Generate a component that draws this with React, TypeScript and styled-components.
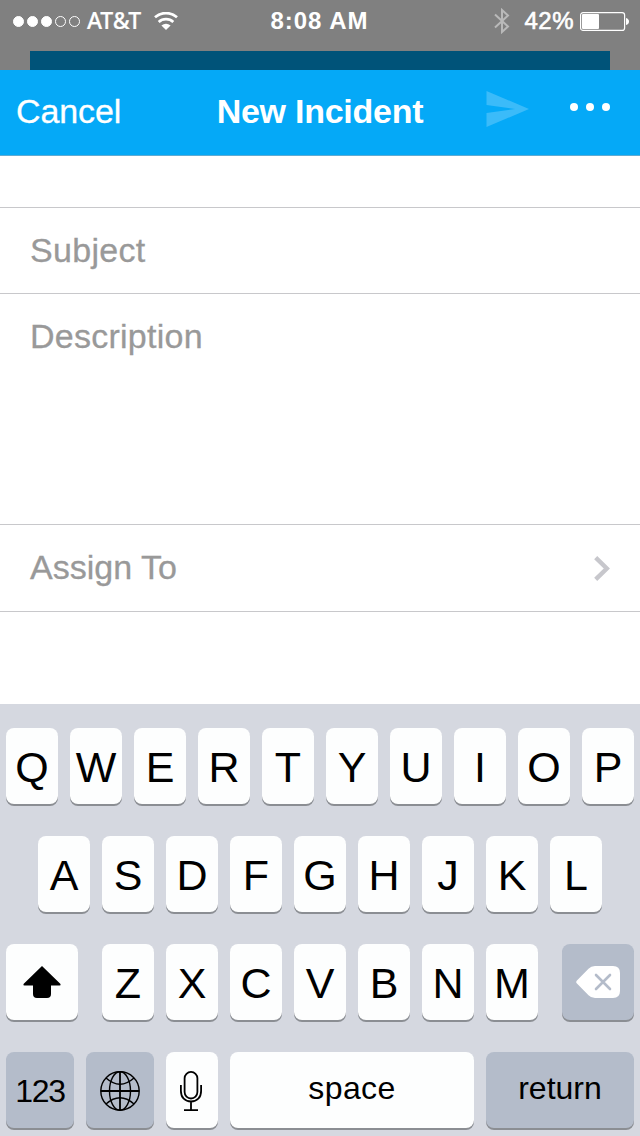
import React from "react";
import styled, { createGlobalStyle } from "styled-components";

const GlobalStyle = createGlobalStyle`
  * { box-sizing: border-box; }
  body {
    margin: 0;
    background: #fff;
    font-family: "Liberation Sans", Arial, sans-serif;
  }
`;

const Screen = styled.div`
  width: 640px;
  height: 1136px;
  overflow: hidden;
  display: flex;
  flex-direction: column;
  background: #fff;
`;

const Top = styled.div`
  height: 70px;
  background: #808080;
  display: flex;
  flex-direction: column;
  justify-content: space-between;
`;

const StatusBar = styled.div`
  height: 40px;
  display: grid;
  grid-template-columns: 1fr auto 1fr;
  align-items: center;
  padding: 0 11px 0 13px;
  color: #fff;
`;

const StatusGroup = styled.div<{ $end?: boolean }>`
  height: 40px;
  display: flex;
  align-items: center;
  justify-content: ${(p) => (p.$end ? "flex-end" : "flex-start")};
`;

const SignalDots = styled.div`
  display: flex;
  gap: 3px;
  padding-top: 1px;
`;

const SignalDot = styled.i<{ $filled: boolean }>`
  width: 11px;
  height: 11px;
  border-radius: 50%;
  border: 1px solid #fff;
  background: ${(p) => (p.$filled ? "#fff" : "transparent")};
`;

const Carrier = styled.span`
  font: 500 23px/38px "Noto Sans", sans-serif;
  letter-spacing: -0.1px;
  padding-bottom: 2px;
  margin: 0 13px 0 7px;
  -webkit-text-stroke: 0.2px #fff;
`;

const Clock = styled.span`
  font-size: 24px;
  font-weight: 700;
  line-height: 40px;
  padding-top: 1px;
  letter-spacing: 1px;
  margin-right: 3px;
`;

const Percent = styled.span`
  font-size: 24px;
  line-height: 40px;
  padding-top: 1px;
  letter-spacing: 0.5px;
  margin: 0 6px 0 14px;
  -webkit-text-stroke: 0.6px #fff;
`;

const BackCard = styled.div`
  height: 19px;
  margin: 0 30px;
  background: #005379;
`;

const NavBar = styled.header`
  height: 86px;
  background: #05a9f7;
  border-bottom: 1px solid #5fabd3;
  display: grid;
  grid-template-columns: 1fr auto 1fr;
  align-items: center;
  padding: 0 30px 3px 16px;
  color: #fff;
  font-size: 34px;
`;

const CancelButton = styled.span`
  justify-self: start;
  letter-spacing: -0.1px;
  -webkit-text-stroke: 0.3px #fff;
`;

const Title = styled.span`
  font-weight: 700;
  letter-spacing: -0.25px;
  margin: 0 -7px 0 7px;
`;

const NavActions = styled.div`
  display: flex;
  justify-content: flex-end;
  align-items: flex-start;
  gap: 41px;
  height: 40px;
`;

const Form = styled.main`
  height: 548px;
  padding-top: 51px;
`;

const Field = styled.div<{ $height: number; $last?: boolean }>`
  height: ${(p) => p.$height}px;
  border-top: 1px solid #c8c8cb;
  border-bottom: ${(p) => (p.$last ? "1px solid #c8c8cb" : "none")};
  padding: 0 30px;
  display: flex;
  justify-content: space-between;
  font-size: 34px;
  line-height: 84px;
  color: #999;
`;

const Placeholder = styled.span<{ $spacing: number }>`
  letter-spacing: ${(p) => p.$spacing}px;
  -webkit-text-stroke: 0.3px #999;
`;

const Disclosure = styled.span`
  display: flex;
  align-items: center;
  height: 86px;
`;

const Keyboard = styled.section`
  flex: 1;
  background: #d5d8e0;
  padding: 24px 6px 0;
  display: flex;
  flex-direction: column;
  gap: 32px;
`;

const KeyRow = styled.div`
  display: flex;
  justify-content: center;
  gap: 12px;
`;

const LetterGroup = styled.div`
  display: flex;
  gap: 12px;
  margin: 0 12px;
`;

const Key = styled.div<{ $width?: number; $dark?: boolean; $drop?: number }>`
  width: ${(p) => p.$width ?? 52}px;
  height: 76px;
  border-radius: 8px;
  background: ${(p) => (p.$dark ? "#b4bcca" : "#fdfefe")};
  box-shadow: 0 2px 0 #8b8e93;
  display: flex;
  align-items: center;
  justify-content: center;
  color: #000;
  font-size: 43px;
  line-height: 76px;
  padding-top: ${(p) => p.$drop ?? 0}px;
`;

const KeyLabel = styled.span<{ $spacing: number; $lift?: number }>`
  font-size: 32px;
  letter-spacing: ${(p) => p.$spacing}px;
  padding-bottom: ${(p) => p.$lift ?? 0}px;
  line-height: 40px;
`;

const WifiIcon = () => (
  <svg width="24" height="18" viewBox="0 0 24 18" fill="none" stroke="#fff">
    <path d="M1 5.3C7.2-.3 16.8-.3 23 5.3" strokeWidth="2.7" />
    <path d="M4.7 9.9C8.8 6.2 15.2 6.2 19.3 9.9" strokeWidth="2.7" />
    <path d="M12 18L7.4 13.4Q12 9.9 16.6 13.4Z" fill="#fff" stroke="none" />
  </svg>
);

const BluetoothIcon = () => (
  <svg width="16" height="26" viewBox="0 0 16 26" fill="none" stroke="#b9b9b9" strokeWidth="2">
    <path d="M1 6.5L14 18.5L8 24V2L14 7.5L1 19.5" />
  </svg>
);

const BatteryIcon = () => (
  <svg width="49" height="20" viewBox="0 0 49 20">
    <rect x="0.6" y="1.6" width="44" height="17.8" rx="2.5" fill="none" stroke="#fff" strokeWidth="1.2" />
    <rect x="2" y="3" width="17" height="15" rx="1" fill="#fff" />
    <path d="M46 7Q49 8 49 10.5T46 14Z" fill="#fff" />
  </svg>
);

const SendIcon = () => (
  <svg width="43" height="36" viewBox="0 0 43 36" fill="#3bbbf9">
    <path d="M.5 0L43 18L.5 36V22L29 18L.5 14Z" />
  </svg>
);

const MoreIcon = () => (
  <svg width="40" height="32" viewBox="0 0 40 32" fill="#fff">
    <circle cx="4" cy="16" r="4" />
    <circle cx="20" cy="16" r="4" />
    <circle cx="36" cy="16" r="4" />
  </svg>
);

const ChevronIcon = () => (
  <svg width="16" height="26" viewBox="0 0 16 26" fill="none" stroke="#c7c7cc" strokeWidth="4.4">
    <path d="M1.7 2.7L12.8 13.5L1.7 24.3" />
  </svg>
);

const ShiftIcon = () => (
  <svg width="38" height="32" viewBox="0 0 38 32">
    <path d="M19 0L37.5 18Q38 19.5 36.5 19.5H28V28Q28 32 24 32H14Q10 32 10 28V19.5H1.5Q0 19.5.5 18Z" />
  </svg>
);

const DeleteIcon = () => (
  <svg width="44" height="32" viewBox="0 0 44 32">
    <path d="M.7 14.7L12.5 2.7Q15 0 19 0H37Q44 0 44 7V25Q44 32 37 32H19Q15 32 12.5 29.3L.7 17.3Q-.3 16 .7 14.7Z" fill="#fff" />
    <path d="M20 9L34 23M34 9L20 23" stroke="#b4bcca" strokeWidth="2.6" strokeLinecap="round" />
  </svg>
);

const GlobeIcon = () => (
  <svg width="40" height="40" viewBox="0 0 40 40" fill="none" stroke="#000" strokeWidth="1.4">
    <circle cx="20" cy="20" r="19.2" />
    <ellipse cx="20" cy="20" rx="10.5" ry="19.2" />
    <path d="M20 .8V39.2M.8 20H39.2" strokeWidth="1.8" />
    <path d="M6 7Q20 19.5 34 7M6 33Q20 20.5 34 33" />
  </svg>
);

const MicIcon = () => (
  <svg width="24" height="40" viewBox="0 0 24 40" fill="none" stroke="#000" strokeWidth="1.8">
    <rect x="4.6" y=".9" width="12.8" height="26.6" rx="6.4" />
    <path d="M.9 14V20C.9 26.5 5 30.5 11 30.5S21.1 26.5 21.1 20V14M11 30.5V39M4 39.1H18" />
  </svg>
);

const Letters = ({ row }: { row: string }) => (
  <>
    {row.split("").map((letter) => (
      <Key key={letter} $drop={1}>
        {letter}
      </Key>
    ))}
  </>
);

export default function App() {
  return (
    <Screen>
      <GlobalStyle />
      <Top>
        <StatusBar>
          <StatusGroup>
            <SignalDots>
              {[true, true, true, false, false].map((filled, i) => (
                <SignalDot key={i} $filled={filled} />
              ))}
            </SignalDots>
            <Carrier>AT&amp;T</Carrier>
            <WifiIcon />
          </StatusGroup>
          <Clock>8:08 AM</Clock>
          <StatusGroup $end>
            <BluetoothIcon />
            <Percent>42%</Percent>
            <BatteryIcon />
          </StatusGroup>
        </StatusBar>
        <BackCard />
      </Top>
      <NavBar>
        <CancelButton>Cancel</CancelButton>
        <Title>New Incident</Title>
        <NavActions>
          <SendIcon />
          <MoreIcon />
        </NavActions>
      </NavBar>
      <Form>
        <Field $height={86}>
          <Placeholder $spacing={0.3}>Subject</Placeholder>
        </Field>
        <Field $height={231}>
          <Placeholder $spacing={0.25}>Description</Placeholder>
        </Field>
        <Field $height={88} $last>
          <Placeholder $spacing={0}>Assign To</Placeholder>
          <Disclosure>
            <ChevronIcon />
          </Disclosure>
        </Field>
      </Form>
      <Keyboard>
        <KeyRow>
          <Letters row="QWERTYUIOP" />
        </KeyRow>
        <KeyRow>
          <Letters row="ASDFGHJKL" />
        </KeyRow>
        <KeyRow>
          <Key $width={72}>
            <ShiftIcon />
          </Key>
          <LetterGroup>
            <Letters row="ZXCVBNM" />
          </LetterGroup>
          <Key $width={72} $dark>
            <DeleteIcon />
          </Key>
        </KeyRow>
        <KeyRow>
          <Key $width={68} $dark $drop={1}>
            <KeyLabel $spacing={-1.3}>123</KeyLabel>
          </Key>
          <Key $width={68} $dark $drop={2}>
            <GlobeIcon />
          </Key>
          <Key $drop={2}>
            <MicIcon />
          </Key>
          <Key $width={244}>
            <KeyLabel $spacing={0.4} $lift={5}>space</KeyLabel>
          </Key>
          <Key $width={148} $dark>
            <KeyLabel $spacing={0} $lift={5}>return</KeyLabel>
          </Key>
        </KeyRow>
      </Keyboard>
    </Screen>
  );
}
